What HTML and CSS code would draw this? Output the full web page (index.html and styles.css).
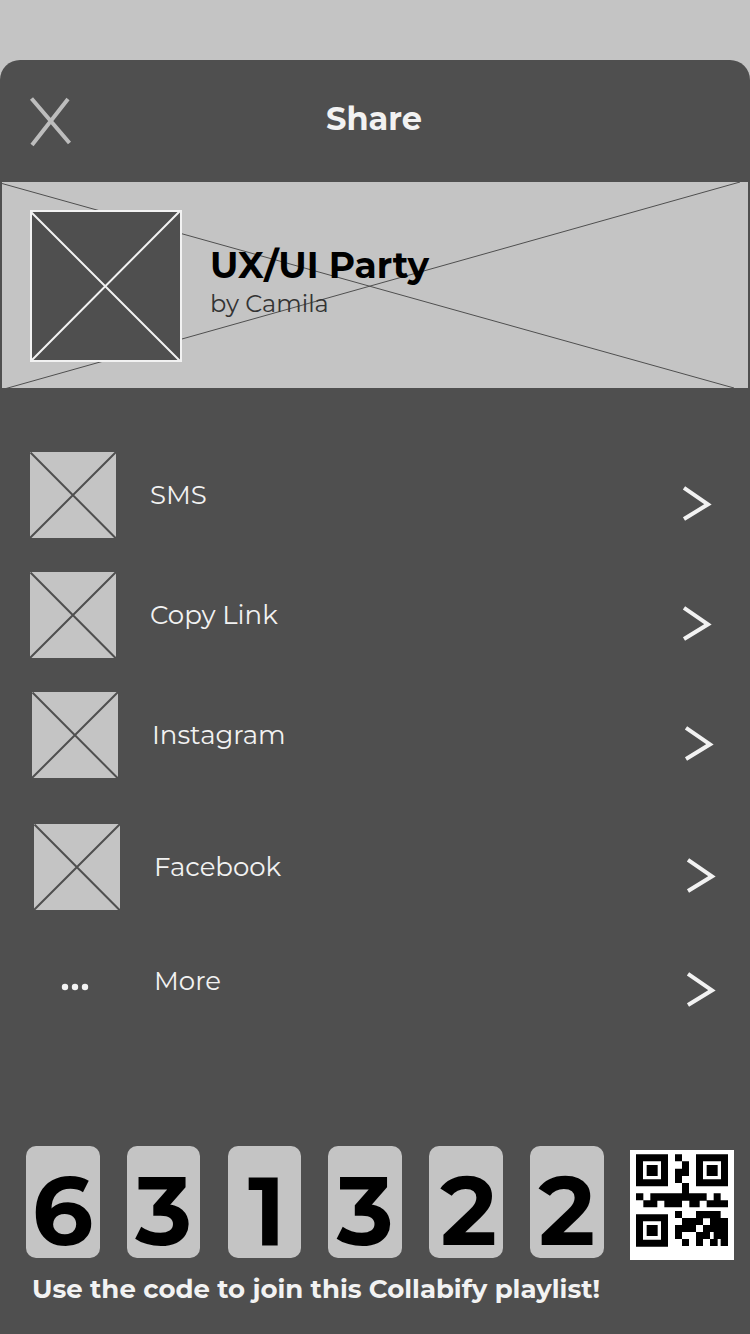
FILE: index.html
```html
<!DOCTYPE html>
<html lang="en">
<head>
<meta charset="utf-8">
<title>Share</title>
<link rel="stylesheet" href="styles.css">
</head>
<body>
<svg class="defs" width="0" height="0" aria-hidden="true">
  <symbol id="box" viewBox="0 0 86 86"><path class="box-fill" d="M0 0H86V86H0Z"/><path class="box-lines" d="M0.500 0.500L86 86.500M86 0L0 86"/></symbol>
  <symbol id="chevron" viewBox="0 0 32 36"><path class="chevron-line" d="M2 1.800L26 18.300L2 33"/></symbol>
</svg>
<main class="sheet">
  <header class="header">
    <svg class="close" width="44" height="52" viewBox="0 0 44 52"><path d="M3.500 2.500L41.500 47M40 3L4 49"/></svg>
    <h1 class="title">Share</h1>
  </header>
  <section class="banner">
    <svg class="banner-lines" width="746" height="206" viewBox="0 0 746 206"><path d="M0 1.500L732 206M4 206.500L738 0"/></svg>
    <svg class="cover" width="152" height="152" viewBox="0 0 152 152"><rect x="1" y="1" width="150" height="150"/><path d="M1 2L150 151M150 1L1 151"/></svg>
    <div class="playlist">
      <h2 class="name">UX/UI Party</h2>
      <p class="author">by Camila</p>
    </div>
  </section>
  <nav class="options">
    <a class="option"><svg class="icon"><use href="#box"/></svg><span class="label">SMS</span><svg class="chevron"><use href="#chevron"/></svg></a>
    <a class="option"><svg class="icon"><use href="#box"/></svg><span class="label">Copy Link</span><svg class="chevron"><use href="#chevron"/></svg></a>
    <a class="option shift-small"><svg class="icon"><use href="#box"/></svg><span class="label">Instagram</span><svg class="chevron"><use href="#chevron"/></svg></a>
    <a class="option shift-large"><svg class="icon"><use href="#box"/></svg><span class="label">Facebook</span><svg class="chevron"><use href="#chevron"/></svg></a>
    <a class="option shift-more"><svg class="icon" viewBox="0 0 86 86"><g class="dots"><circle cx="31" cy="49" r="3.200"/><circle cx="41" cy="49" r="3.200"/><circle cx="51" cy="49" r="3.200"/></g></svg><span class="label">More</span><svg class="chevron"><use href="#chevron"/></svg></a>
  </nav>
  <footer class="join">
    <div class="code-row">
      <div class="code">
        <span class="digit">6</span>
        <span class="digit three">3</span>
        <span class="digit one">1</span>
        <span class="digit three">3</span>
        <span class="digit two">2</span>
        <span class="digit last">2</span>
      </div>
      <svg class="qr" width="104" height="110" viewBox="30 30 312 330">
        <path class="qr-paper" d="M30 30H342V360H30Z"/>
        <path fill-rule="evenodd" d="M48 43h96v96h-96zM69 64v54h54v-54zM80 75h33v33h-33zM228 43h96v96h-96zM249 64v54h54v-54zM260 75h33v33h-33zM48 223h96v97h-96zM69 244v55h54v-55zM80 255h33v33h-33z"/>
        <path d="M165 43h21v21h-21zM186 64h21v44h-21zM165 86h21v43h-21zM186 129h21v32h-21zM48 160h22v21h-22zM91 160h169v22h-169zM281 160h21v22h-21zM70 181h42v21h-42zM133 181h53v21h-53zM208 181h31v21h-31zM260 181h64v21h-64zM165 213h21v21h-21zM228 213h74v22h-74zM186 234h63v21h-63zM270 234h54v22h-54zM165 255h63v21h-63zM249 255h75v21h-75zM165 276h21v21h-21zM228 276h42v21h-42zM281 276h43v21h-43zM186 297h21v21h-21zM228 297h21v21h-21zM270 297h23v21h-23zM302 297h22v21h-22z"/>
      </svg>
    </div>
    <p class="hint">Use the code to join this Collabify playlist!</p>
  </footer>
</main>
</body>
</html>
```

FILE: styles.css
```css
* { box-sizing: border-box; }
body {
  margin: 0;
  padding-top: 60px;
  height: 1334px;
  overflow: hidden;
  background: #c4c4c4;
  font-family: Montserrat, Inter, sans-serif;
}
h1, h2, p { margin: 0; white-space: nowrap; }
svg { display: block; flex: none; }
.defs { position: absolute; }
.sheet {
  display: flex;
  flex-direction: column;
  height: 1274px;
  background: #4f4f4f;
  border-radius: 20px 20px 0 0;
}
.header {
  display: flex;
  align-items: flex-start;
  height: 122px;
  padding: 36px 0 0 28px;
}
.close { fill: none; stroke: #bdbdbd; stroke-width: 4; }
.title { margin: 3px 0 0 254px; color: #f2f2f2; font-size: 32px; line-height: 39px; font-weight: 700; }
.banner {
  position: relative;
  display: flex;
  height: 206px;
  margin: 0 2px;
  padding: 28px 0 0 28px;
  background: #c4c4c4;
}
.banner-lines { position: absolute; inset: 0; fill: none; stroke: #4f4f4f; stroke-width: 1; }
.cover { position: relative; fill: #4f4f4f; stroke: #f2f2f2; stroke-width: 2; }
.playlist { position: relative; padding: 33px 0 0 28px; }
.name { color: #000; font-size: 36px; line-height: 44px; font-weight: 700; }
.author { margin-top: 2px; color: #333; font-size: 24px; line-height: 29px; font-weight: 400; }
.options { display: flex; flex-direction: column; padding-top: 64px; gap: 34px; height: 754px; }
.option { display: flex; height: 86px; padding-left: 30px; flex: none; }
.shift-small { padding-left: 32px; }
.shift-large { padding-left: 34px; margin-top: 12px; }
.shift-more { padding-left: 34px; margin-top: -6px; }
.icon { width: 86px; height: 86px; }
.box-fill { fill: #c4c4c4; }
.box-lines { fill: none; stroke: #4f4f4f; stroke-width: 2; }
.dots { fill: #f2f2f2; }
.label {
  width: 200px;
  padding-top: 27px;
  margin-left: 34px;
  color: #f2f2f2;
  font-size: 26px;
  line-height: 32px;
  font-weight: 400;
}
.chevron { width: 32px; height: 36px; margin: 34px 0 0 332px; }
.chevron-line { fill: none; stroke: #f2f2f2; stroke-width: 4; }
.join { padding-top: 4px; }
.code-row { display: flex; gap: 26.300px; padding-left: 26px; }
.code { display: flex; gap: 27.100px; }
.digit {
  width: 73.700px;
  height: 112.300px;
  padding: 6px 0 0 6px;
  background: #c4c4c4;
  border-radius: 10px;
  color: #000;
  font-size: 96px;
  line-height: 117px;
  font-weight: 700;
}
.three { padding-left: 8.500px; }
.one { padding-left: 20.500px; }
.two { padding-left: 11px; }
.last { padding-left: 8.500px; }
.qr { margin-top: 4px; }
.qr-paper { fill: #fff; }
.hint { margin: 12.700px 0 0 32px; color: #f2f2f2; font-size: 26px; line-height: 32px; font-weight: 700; }
```
